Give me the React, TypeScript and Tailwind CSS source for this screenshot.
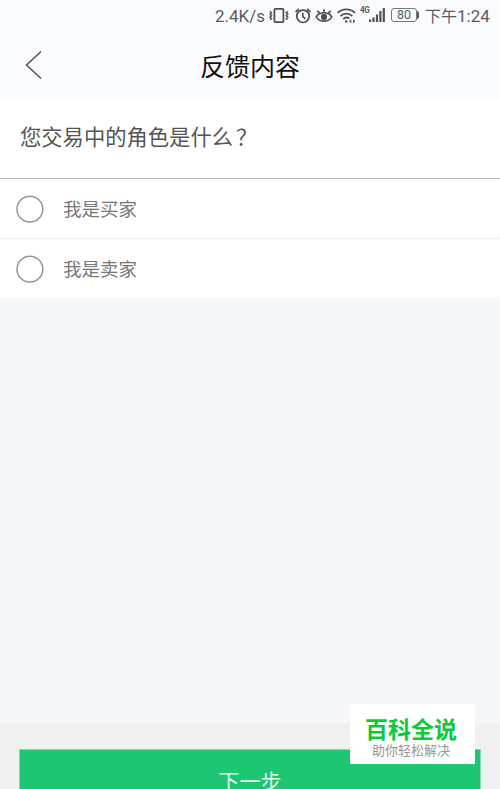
import React from 'react';

function VibrateIcon() {
  return (
    <svg className="h-4 w-5 shrink-0" viewBox="0 0 20 16" fill="none" stroke="#505054" strokeWidth="1.8">
      <rect x="5.4" y="0.9" width="9" height="13.2" rx="0.8" />
      <path d="M1 3.200l1.500 1.500-1.500 1.500 1.500 1.500-1.500 1.500 1.500 1.500-1 1M18.800 3.200l-1.500 1.500 1.500 1.500-1.500 1.500 1.500 1.500-1.500 1.500 1 1" strokeWidth="1.500" />
    </svg>
  );
}

function AlarmIcon() {
  return (
    <svg className="h-4 w-4 shrink-0" viewBox="0 0 16 16" fill="none" stroke="#505054" strokeWidth="1.7">
      <circle cx="8" cy="8.3" r="6.200" />
      <path d="M7.800 4.800v3.700l2.600 2.400M0.600 4l3.300-3M15.400 4l-3.300-3" />
    </svg>
  );
}

function EyeIcon() {
  return (
    <svg className="h-4 w-[18px] shrink-0" viewBox="0 0 18 16" fill="none" stroke="#505054" strokeWidth="1.7">
      <path d="M1.300 8.800C4.500 3.400 13.500 3.400 16.700 8.800C13.500 14.600 4.500 14.600 1.300 8.800Z" />
      <circle cx="9" cy="8.900" r="3.100" fill="#505054" stroke="none" />
      <path d="M9 4.500V1.200M4.600 5.200L2.300 2.800M13.400 5.200L15.700 2.800" />
    </svg>
  );
}

function WifiIcon() {
  return (
    <svg className="h-4 w-5 shrink-0" viewBox="0 0 20 16" fill="none" stroke="#505054" strokeWidth="1.8">
      <path d="M0.700 4.900C5.300.3 13.300.3 17.900 4.900M3.400 8.200C6.900 4.700 11.900 4.700 15.300 8.200M6.200 11.100C8 9.300 10.600 9.300 12.400 10.600" />
      <circle cx="9.200" cy="13.500" r="1.300" fill="#505054" stroke="none" />
      <path d="M12 13.300l2.300-2v4zM18.300 13.300l-2.300-2v4z" fill="#505054" stroke="none" />
    </svg>
  );
}

function SignalIcon() {
  return (
    <svg className="h-4 w-4 shrink-0" viewBox="0 0 16 16" fill="#505054">
      <path d="M0 11.500h2.200v2.500H0zM3.400 9.500h2.200v4.500H3.400zM6.900 6.500h2.200v7.500H6.900zM10.300 3h2.200v11h-2.200zM13.700 0h2.200v14h-2.200z" />
    </svg>
  );
}

function StatusBar() {
  return (
    <div className="flex h-8 items-center pl-[215px] text-[#5a5a5e]">
      <span className="w-[54px] shrink-0 font-[Roboto] text-[17px] leading-8">2.4K/s</span>
      <span className="flex"><VibrateIcon /></span>
      <span className="ml-[6px] flex"><AlarmIcon /></span>
      <span className="ml-1 flex"><EyeIcon /></span>
      <span className="ml-1 flex"><WifiIcon /></span>
      <span className="ml-[3px] flex w-[9px] shrink-0 self-start pt-[5px]">
        <span className="origin-left scale-x-[0.85] font-[Roboto] text-[9.500px] font-bold leading-[10px] tracking-[-0.5px]">4G</span>
      </span>
      <SignalIcon />
      <span className="ml-[6px] flex h-[14px] w-[26px] shrink-0 -translate-y-px items-center justify-center rounded-[3px] border border-[#77777b] font-[Roboto] text-[12.500px] leading-none">80</span>
      <span className="h-2 w-[2px] shrink-0 -translate-y-px rounded-r-sm bg-[#5a5a5e]" />
      <span className="ml-[6px] whitespace-nowrap font-[Roboto,'Noto_Sans_CJK_SC',sans-serif] text-[17px] leading-8">
        <span className="text-[16px]">下午</span>1:24
      </span>
    </div>
  );
}

function Option({ label, last = false }: { label: string; last?: boolean }) {
  return (
    <label className={`flex items-center bg-white pl-4 ${last ? 'h-[59px]' : 'h-[60px] border-b border-[#eeeff0]'}`}>
      <svg className="h-7 w-7 shrink-0" viewBox="0 0 28 28" fill="none" stroke="#959595" strokeWidth="1.500">
        <circle cx="13.900" cy="14.200" r="12.900" />
      </svg>
      <span className="ml-[19px] pb-px text-[18.500px] leading-[27px] text-[#777]">{label}</span>
    </label>
  );
}

export default function App() {
  return (
    <div className="relative flex h-[789px] w-[500px] flex-col overflow-hidden bg-[#f5f7fa] font-['Noto_Sans_CJK_SC',sans-serif] font-normal">
      <header className="h-[99px] shrink-0 bg-[#fafbfe]">
        <StatusBar />
        <div className="grid h-[66px] grid-cols-[1fr_auto_1fr] items-center">
          <svg className="ml-[25px] h-[30px] w-[18px]" viewBox="0 0 18 30" fill="none" stroke="#505050" strokeWidth="1.500">
            <path d="M16 1.500L1.500 15L16 28.500" />
          </svg>
          <h1 className="text-[25px] leading-[36px] text-[#111]">反馈内容</h1>
        </div>
      </header>

      <div className="h-[80px] shrink-0 border-b border-[#bfbfbf] bg-white pl-5 pt-[21px]">
        <h2 className="text-[21.300px] leading-8 text-[#555]">您交易中的角色是什么<span className="ml-[3px]">？</span></h2>
      </div>
      <Option label="我是买家" />
      <Option label="我是卖家" last />

      <footer className="mt-auto flex h-[66px] shrink-0 justify-center bg-[#f0f0f0] pt-[26px]">
        <button className="flex h-[60px] w-[462px] shrink-0 items-center justify-center border border-[#7fdcae] bg-[#1dc672] pt-[3px] text-[21px] leading-none text-[#e5faef]">下一步</button>
      </footer>

      <div className="absolute left-[350px] top-[704px] flex h-[60px] w-[125px] flex-col items-center bg-white pr-[3px] pt-[10px]">
        <strong className="text-[23px] font-bold leading-[28px] text-[#08cb37]">百科全说</strong>
        <span className="text-[13px] leading-[16px] text-[#969696]">助你轻松解决</span>
      </div>
    </div>
  );
}
